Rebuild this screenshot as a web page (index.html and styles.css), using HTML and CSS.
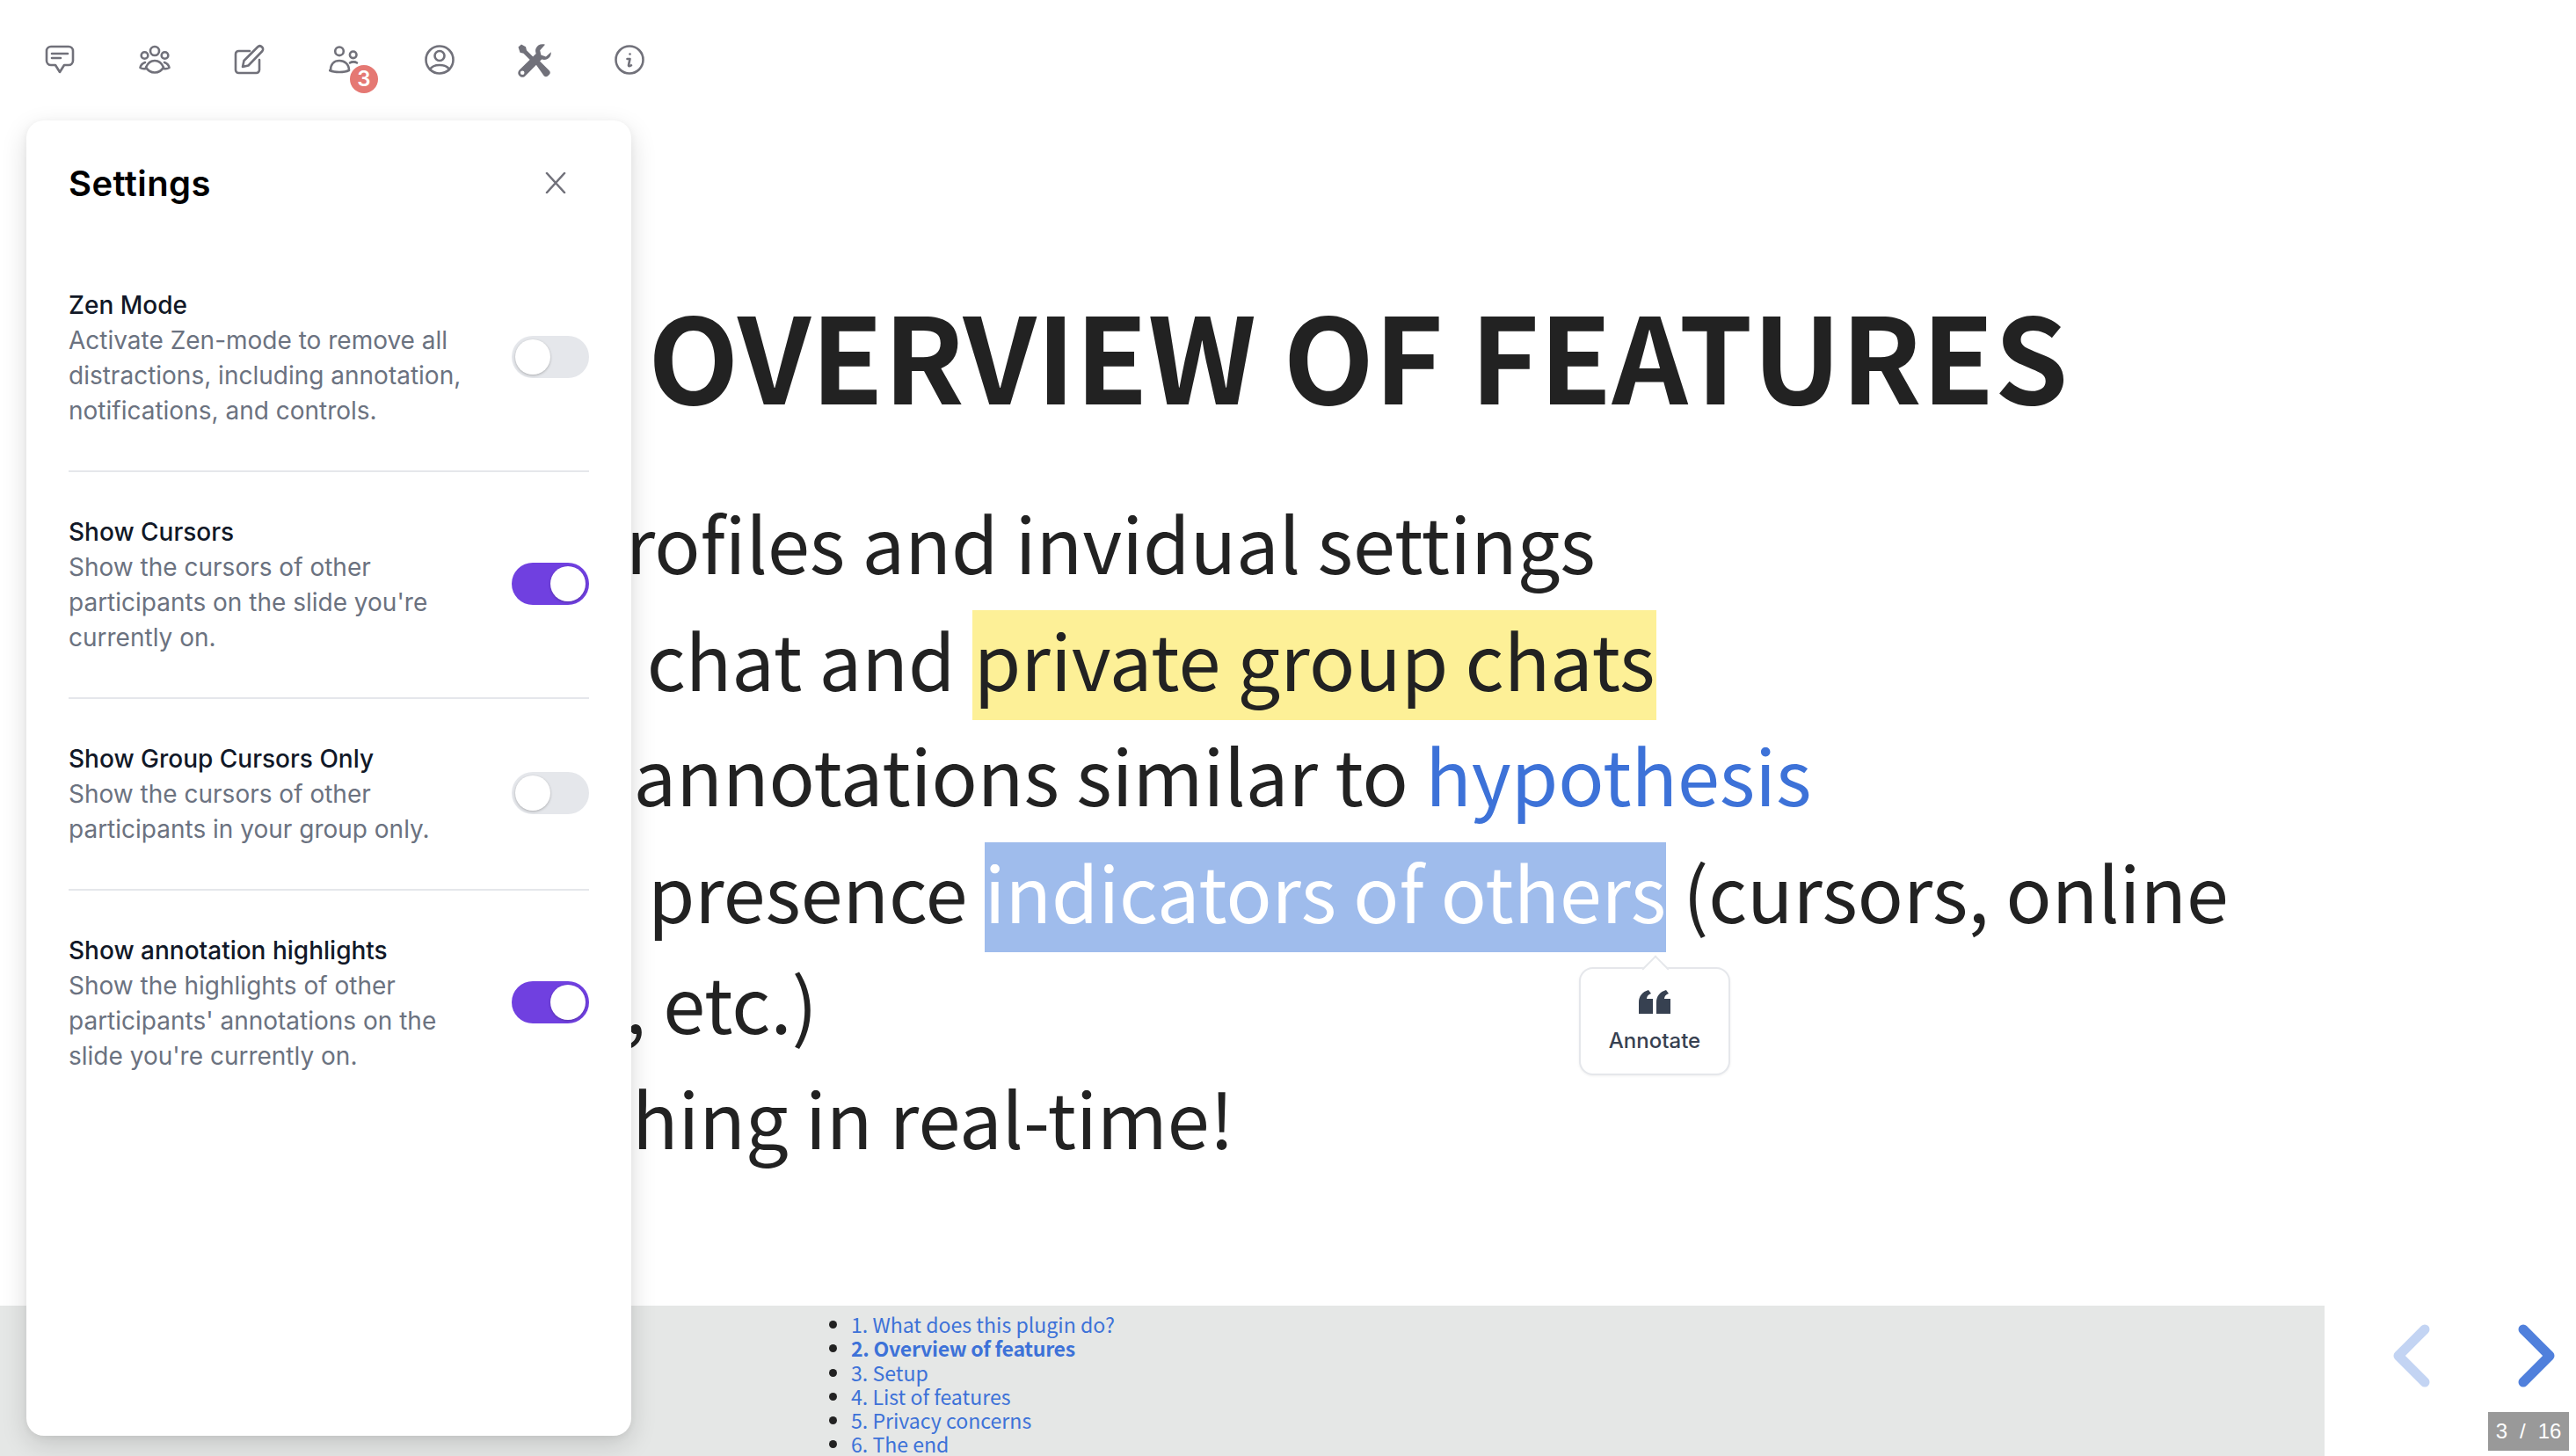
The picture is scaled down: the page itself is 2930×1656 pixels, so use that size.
FILE: index.html
```html
<!DOCTYPE html>
<html lang="en">
<head>
<meta charset="utf-8">
<title>Settings</title>
<link rel="stylesheet" href="styles.css">
</head>
<body>
<div class="stage">
  <main class="slide">
    <h1 class="slide-title">OVERVIEW OF FEATURES</h1>
    <ul class="bullets">
      <li class="line l1">User profiles and invidual settings</li>
      <li class="line l2">Group chat and <span class="mark">private group chats</span></li>
      <li class="line l3">Slide annotations similar to <a class="link">hypothesis</a></li>
      <li class="line l4">See presence <span class="sel">indicators of others</span> (cursors, online</li>
      <li class="line l5">status, etc.)</li>
      <li class="line l6">Everything in real-time!</li>
    </ul>
  </main>
  <footer class="bottom">
    <nav class="toc">
      <ul class="toc-list">
        <li>1. What does this plugin do?</li>
        <li class="current">2. Overview of features</li>
        <li>3. Setup</li>
        <li>4. List of features</li>
        <li>5. Privacy concerns</li>
        <li>6. The end</li>
      </ul>
    </nav>
  </footer>

  <div class="toolbar">
    <button class="tool">
      <svg class="ico" viewBox="0 0 36 36"><path d="M8 3h20a5 5 0 0 1 5 5v11a5 5 0 0 1-5 5h-5l-5 8-5-8H8a5 5 0 0 1-5-5V8a5 5 0 0 1 5-5z"/><path d="M9 11h18M9 16h10"/></svg>
    </button>
    <button class="tool">
      <svg class="ico" viewBox="0 0 36 36"><circle cx="18" cy="8" r="5"/><circle cx="6.5" cy="13" r="3.8"/><circle cx="29.500" cy="13" r="3.800"/><path d="M18 19c-5 0-8 3-10 7.500 2 3.500 6 6 10 6s8-2.500 10-6c-2-4.500-5-7.500-10-7.500z"/><path d="M7 21c-3 1-5 3-5.500 6 1.500 1 4 1.500 6.500 1M29 21c3 1 5 3 5.500 6-1.500 1-4 1.500-6.500 1"/></svg>
    </button>
    <button class="tool">
      <svg class="ico" viewBox="0 0 36 36"><path d="M18 8H5.500A3.500 3.500 0 0 0 2 11.500v18A3.500 3.500 0 0 0 5.500 33h20a3.500 3.500 0 0 0 3.500-3.500V18"/><path d="M10 26l1.500-7L27 3.500c1.500-1.500 3.500-1.500 5 0s1.500 3.500 0 5L16.500 24.500z"/></svg>
    </button>
    <button class="tool">
      <svg class="ico" viewBox="0 0 36 36"><circle cx="12" cy="8.300" r="4.800"/><circle cx="27.700" cy="12.300" r="3.800"/><path d="M2 30c0-7 4-11 10-11s11 4 11 11c-3 1.500-7 2-11 2s-8-.5-11-2z"/><path d="M24 21.500c2-1.500 6-1.500 8 0"/></svg>
      <span class="badge">3</span>
    </button>
    <button class="tool">
      <svg class="ico" viewBox="0 0 36 36"><circle cx="18" cy="18" r="15.500"/><circle cx="18" cy="13.500" r="5.500"/><path d="M7 29c2-3.500 6-5 11-5s9 1.500 11 5"/></svg>
    </button>
    <button class="tool">
      <svg class="ico solid" viewBox="0 0 38 38"><path d="M0.500 3.500L4 .5l5 2.800 1 4 9 9-3.500 3.500-9-9-4-1z"/><path d="M20 22.500l4-4 11.500 11.500a3.500 3.500 0 0 1 .3 4.800l-1.500 1.500a3.500 3.500 0 0 1-4.800-.3z"/><path fill-rule="evenodd" d="M31 .8c-4.500-1.500-9 .5-10.500 4.500-.7 2-.5 4 .2 5.700L1.800 29.500c-2 2-2 5 0 6.800 2 2 5 2 6.800 0L27.200 17.500c3.500 1.300 7.500 0 9.500-3.200.9-1.500 1.200-3.300 1-5l-5.800 5.300-5.500-2-1.200-5.300z M5.200 30.400a2.300 2.300 0 1 1 0 4.600 2.300 2.300 0 0 1 0-4.600z"/></svg>
    </button>
    <button class="tool">
      <svg class="ico" viewBox="0 0 36 36"><circle cx="18" cy="18" r="15.500"/><path d="M15.500 17h3l-1.500 7c-.3 1.500 1.500 1.500 3 .3"/><circle class="dot" cx="18.500" cy="11.500" r="1.300"/></svg>
    </button>
  </div>

  <aside class="panel">
    <header class="panel-head">
      <h2 class="panel-title">Settings</h2>
      <svg class="close" viewBox="0 0 24 24"><path d="M2 1l20 22M22 1L2 23"/></svg>
    </header>
    <section class="row">
      <div class="row-text">
        <div class="row-title">Zen Mode</div>
        <div class="row-desc">Activate Zen-mode to remove all distractions, including annotation, notifications, and controls.</div>
      </div>
      <span class="toggle"><span class="knob"></span></span>
    </section>
    <section class="row">
      <div class="row-text">
        <div class="row-title">Show Cursors</div>
        <div class="row-desc">Show the cursors of other participants on the slide you're currently on.</div>
      </div>
      <span class="toggle on"><span class="knob"></span></span>
    </section>
    <section class="row">
      <div class="row-text">
        <div class="row-title">Show Group Cursors Only</div>
        <div class="row-desc">Show the cursors of other participants in your group only.</div>
      </div>
      <span class="toggle"><span class="knob"></span></span>
    </section>
    <section class="row last">
      <div class="row-text">
        <div class="row-title">Show annotation highlights</div>
        <div class="row-desc">Show the highlights of other participants' annotations on the slide you're currently on.</div>
      </div>
      <span class="toggle on"><span class="knob"></span></span>
    </section>
  </aside>

  <div class="popup">
    <svg class="quote" viewBox="0 0 36 27"><path d="M0 27V14C0 7 4 2 11 0l3 4c-3 1-5 3-5 6h7v17zM20 27V14c0-7 4-12 11-14l3 4c-3 1-5 3-5 6h7v17z"/></svg>
    <span class="popup-label">Annotate</span>
  </div>

  <svg class="arrow prev" viewBox="0 0 40 70"><path d="M35 5L5 35l30 30"/></svg>
  <svg class="arrow next" viewBox="0 0 40 70"><path d="M5 5l30 30L5 65"/></svg>
  <div class="counter"><span>3</span><span>/</span><span>16</span></div>
</div>
</body>
</html>
```

FILE: styles.css
```css
* { box-sizing: border-box; }
html, body { margin: 0; padding: 0; background: #fff; }
.stage {
  position: relative;
  width: 2930px;
  height: 1656px;
  overflow: hidden;
  display: grid;
  grid-template-rows: 1fr 171px;
  font-family: Inter, "Liberation Sans", sans-serif;
}
.slide {
  padding: 0 0 0 737px;
  font-family: "Noto Sans CJK SC", "Noto Sans", sans-serif;
  color: #222;
  min-width: 0;
}
.slide-title {
  margin: 0;
  padding-top: 295px;
  font-size: 134.5px;
  line-height: 214px;
  font-weight: 700;
  white-space: nowrap;
}
.bullets { list-style: none; margin: 41px 0 0; padding: 0; }
.line { font-size: 86.4px; line-height: 131px; height: 131px; white-space: nowrap; }
.l1 { margin-left: -282px; height: 133px; }
.l2 { margin-left: -271px; }
.l3 { margin-left: -237px; height: 133px; }
.l4 { margin-left: -166px; height: 126px; font-size: 86.1px; }
.l5 { margin-left: -268px; }
.l6 { margin-left: -274px; }
.mark { display: inline-block; background: #fdf097; height: 125px; line-height: 110px; padding: 0 2px; }
.sel { display: inline-block; background: #9fbcec; color: #fff; height: 125px; line-height: 110px; }
.link { color: #3d72d8; }

.bottom { background: #e5e7e6; margin-right: 286px; padding-left: 968px; overflow: hidden; }
.toc { font-family: "Noto Sans CJK SC", "Noto Sans", sans-serif; color: #222; }
.toc-list { margin: 8px 0 0; padding: 0; font-size: 23.1px; line-height: 27.3px; }
.toc-list li { color: #3d72d8; }
.toc-list li::marker { color: #222; }
.toc-list .current { font-weight: 700; letter-spacing: -.3px; }

.toolbar { position: absolute; left: 14px; top: 50px; display: flex; }
.tool {
  position: relative;
  width: 108px;
  height: 36px;
  padding: 0;
  border: 0;
  background: none;
  display: flex;
  justify-content: center;
}
.ico { width: 36px; height: 36px; fill: none; stroke: #71717a; stroke-width: 2.600; stroke-linecap: round; stroke-linejoin: round; }
.ico .dot { fill: #71717a; stroke: none; }
.ico.solid { width: 38px; height: 38px; fill: #71717a; stroke: none; }
.badge {
  position: absolute;
  left: 60px;
  top: 24px;
  width: 32px;
  height: 32px;
  border-radius: 50%;
  background: #e57873;
  color: #fff;
  font: 600 24px/32px Inter, sans-serif;
  text-align: center;
}

.panel {
  position: absolute;
  left: 30px;
  top: 137px;
  width: 688px;
  height: 1496px;
  background: #fff;
  border-radius: 20px;
  padding: 0 48px;
  box-shadow: 0 10px 30px rgba(0,0,0,.14), 0 2px 8px rgba(0,0,0,.05);
}
.panel-head { display: flex; justify-content: space-between; align-items: center; height: 142px; padding-right: 26px; }
.panel-title { margin: 0; font-size: 40px; font-weight: 600; letter-spacing: .4px; color: #000; }
.close { width: 24px; height: 24px; fill: none; stroke: #71717a; stroke-width: 2.600; stroke-linecap: round; }
.row {
  display: flex;
  justify-content: space-between;
  align-items: center;
  padding: 48px 0;
  border-bottom: 2px solid #e5e7eb;
}
.row.last { border-bottom: 0; }
.row-text { width: 470px; font-size: 28px; line-height: 40px; }
.row-title { color: #111827; font-weight: 500; }
.row-desc { color: #6b7280; }
.toggle {
  display: flex;
  flex: none;
  width: 88px;
  height: 48px;
  margin-top: -2px;
  padding: 4px;
  border-radius: 24px;
  background: #e5e7eb;
}
.knob { width: 40px; height: 40px; border-radius: 50%; background: #fff; box-shadow: 0 1px 3px rgba(0,0,0,.25); }
.toggle.on { background: #7040e0; justify-content: flex-end; }

.popup {
  position: absolute;
  left: 1796px;
  top: 1100px;
  width: 172px;
  height: 123px;
  background: #fff;
  border: 2px solid #e5e7eb;
  border-radius: 16px;
  display: flex;
  flex-direction: column;
  align-items: center;
  padding-top: 24px;
  box-shadow: 0 1px 3px rgba(0,0,0,.06);
}
.popup::before {
  content: "";
  position: absolute;
  left: 74px;
  top: -11px;
  width: 20px;
  height: 20px;
  background: #fff;
  border-left: 2px solid #e5e7eb;
  border-top: 2px solid #e5e7eb;
  transform: rotate(45deg);
}
.quote { width: 36px; height: 27px; fill: #374151; }
.popup-label { margin-top: 16px; font-size: 24px; line-height: 30px; font-weight: 500; color: #374151; }

.arrow { position: absolute; top: 1507px; width: 40px; height: 70px; fill: none; stroke-width: 11; stroke-linecap: round; stroke-linejoin: round; overflow: visible; }
.prev { left: 2723px; stroke: #c3d4f3; }
.next { left: 2865px; stroke: #5080dc; }
.counter {
  position: absolute;
  left: 2830px;
  top: 1606px;
  width: 92px;
  height: 44px;
  background: #999;
  color: #fff;
  display: flex;
  justify-content: center;
  align-items: center;
  font: 24px/44px "Liberation Sans", sans-serif;
  gap: 14px;
}
```
